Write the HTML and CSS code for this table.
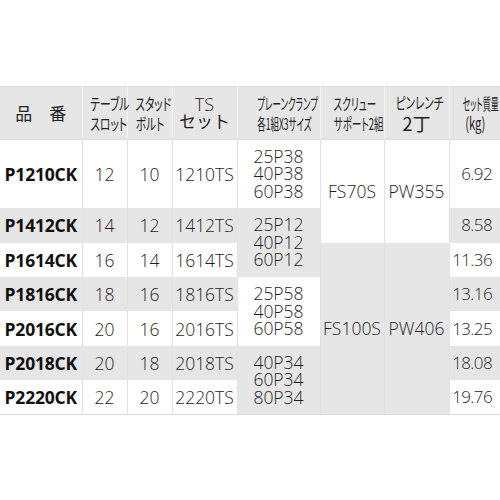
FILE: index.html
```html
<!DOCTYPE html>
<html lang="ja">
<head>
<meta charset="utf-8">
<link rel="stylesheet" href="styles.css">
</head>
<body>
<div class="page">
<table class="spec">
<colgroup>
<col class="c1"><col class="c2"><col class="c3"><col class="c4"><col class="c5"><col class="c6"><col class="c7"><col class="c8">
</colgroup>
<thead>
<tr>
<th><span class="big">品　番</span></th>
<th><span class="k k1">テーブル</span><span class="k k2">スロット</span></th>
<th><span class="k k3">スタッド</span><span class="k k4">ボルト</span></th>
<th><span class="big ts">TS</span><span class="big ts2">セット</span></th>
<th><span class="k k5">プレーンクランプ</span><span class="k k6">各1組X3サイズ</span></th>
<th><span class="k k7">スクリュー</span><span class="k k8">サポート2組</span></th>
<th><span class="k k9">ピンレンチ</span><span class="big pw">2丁</span></th>
<th><span class="k k10">セット質量</span><span class="k k11">(kg)</span></th>
</tr>
</thead>
<tbody>
<tr class="tall">
<td class="name">P1210CK</td><td>12</td><td>10</td><td>1210TS</td>
<td class="cl">25P38<br>40P38<br>60P38</td>
<td rowspan="2">FS70S</td><td rowspan="2">PW355</td>
<td class="wt">6.92</td>
</tr>
<tr class="g">
<td class="name">P1412CK</td><td>14</td><td>12</td><td>1412TS</td>
<td class="cl" rowspan="2">25P12<br>40P12<br>60P12</td>
<td class="wt">8.58</td>
</tr>
<tr>
<td class="name">P1614CK</td><td>16</td><td>14</td><td>1614TS</td>
<td class="gc" rowspan="5">FS100S</td><td class="gc" rowspan="5">PW406</td>
<td class="wt">11.36</td>
</tr>
<tr class="g">
<td class="name">P1816CK</td><td>18</td><td>16</td><td>1816TS</td>
<td class="cl wc" rowspan="2">25P58<br>40P58<br>60P58</td>
<td class="wt">13.16</td>
</tr>
<tr>
<td class="name">P2016CK</td><td>20</td><td>16</td><td>2016TS</td>
<td class="wt">13.25</td>
</tr>
<tr class="g">
<td class="name">P2018CK</td><td>20</td><td>18</td><td>2018TS</td>
<td class="cl" rowspan="2">40P34<br>60P34<br>80P34</td>
<td class="wt">18.08</td>
</tr>
<tr>
<td class="name">P2220CK</td><td>22</td><td>20</td><td>2220TS</td>
<td class="wt">19.76</td>
</tr>
</tbody>
</table>
</div>
</body>
</html>
```

FILE: styles.css
```css
html, body {
  margin: 0;
  background: #ffffff;
}
body {
  font-family: "Noto Sans CJK JP", "Noto Sans", sans-serif;
  color: #222222;
}
.page {
  padding-top: 86px;
}
.spec {
  width: 500px;
  border-collapse: collapse;
  table-layout: fixed;
  border-top: 1px solid #dcdcdc;
  border-bottom: 1px solid #dcdcdc;
}
.c1 { width: 82px; }
.c2 { width: 45px; }
.c3 { width: 45px; }
.c4 { width: 65px; }
.c5 { width: 83px; }
.c6 { width: 64px; }
.c7 { width: 65px; }
.c8 { width: 51px; }

.spec th {
  background: #e6e6e6;
  height: 52px;
  padding: 0;
  font-weight: 400;
  border-left: 1px solid #f5f5f5;
  border-bottom: 1px solid #dcdcdc;
  vertical-align: middle;
  text-align: center;
}
.spec th:first-child {
  border-left: none;
}
.big {
  display: block;
  font-size: 17px;
  line-height: 18px;
  white-space: nowrap;
}
.ts {
  font-family: "Open Sans", "Noto Sans", sans-serif;
  font-weight: 300;
  font-size: 18px;
  line-height: 15px;
}
.ts2 { line-height: 18px; }
.pw { line-height: 22px; font-size: 18px; }
.k {
  display: block;
  font-size: 16px;
  line-height: 20px;
  white-space: nowrap;
  font-feature-settings: "palt";
  transform: scaleX(0.67);
}
.k5, .k6 { transform: scaleX(0.53); }
.k7, .k8 { transform: scaleX(0.6); }
.k9 { transform: scaleX(0.66); }
.k10 { transform: scaleX(0.5); }
.k11 { font-size: 17px; transform: scaleX(0.66); }

.spec td {
  padding: 0;
  text-align: center;
  vertical-align: middle;
  border-left: 1px solid #e2e2e2;
  font-family: "Open Sans", "Noto Sans", sans-serif;
  font-weight: 300;
  font-size: 17.5px;
  line-height: 18px;
  white-space: nowrap;
  color: #1e1e1e;
}
.spec tr { height: 34.4px; }
.spec tr.tall { height: 68.8px; }
.spec tr.g td { background: #e6e6e6; }
.spec td.name {
  border-left: none;
  font-weight: 700;
  letter-spacing: -0.2px;
  color: #111111;
}
.spec td.cl { line-height: 17.5px; }
.spec td.gc { background: #e6e6e6; }
.spec tr.g td.wc { background: #ffffff; }
.spec td.wt {
  text-align: right;
  padding-right: 8px;
  font-size: 17px;
  letter-spacing: -0.6px;
}
```
